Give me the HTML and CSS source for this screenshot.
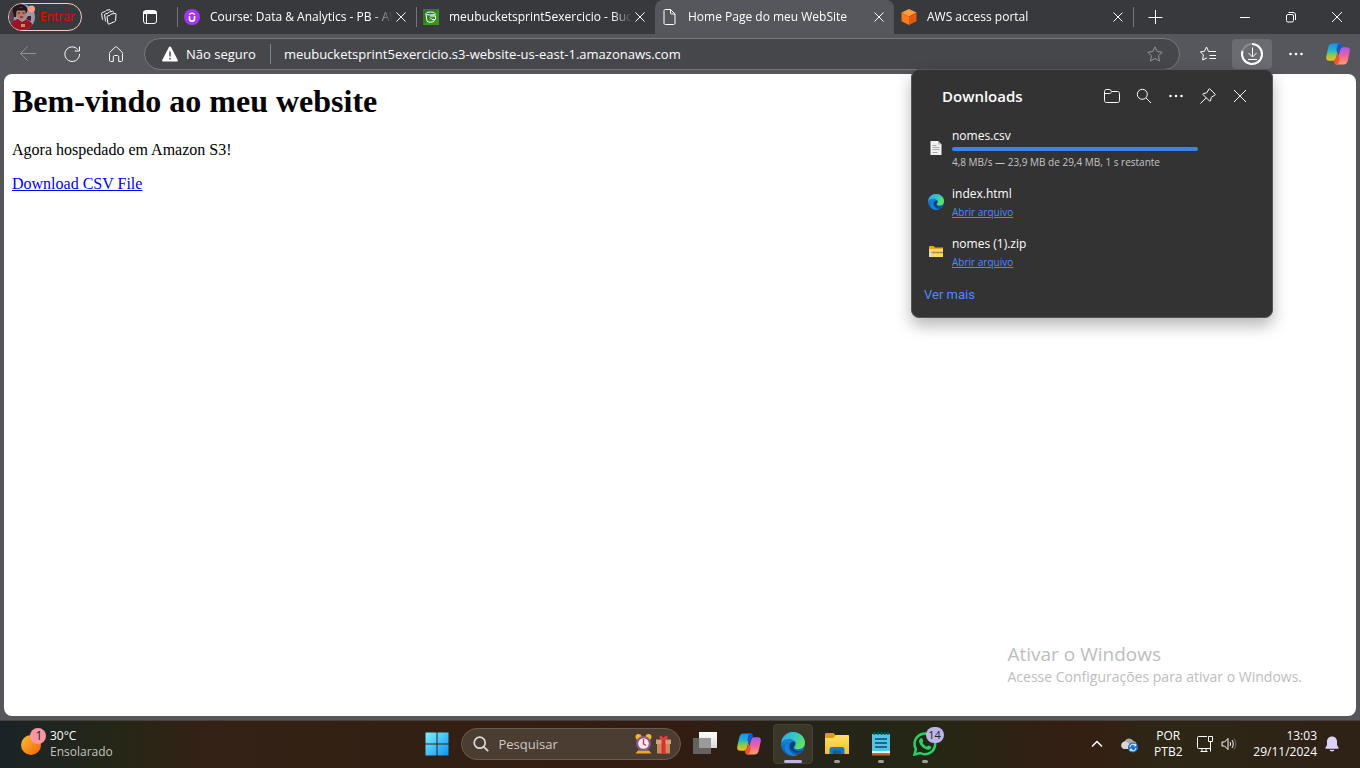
FILE: index.html
```html
<!DOCTYPE html>
<html lang="pt-BR">
<head>
<meta charset="utf-8">
<title>Home Page do meu WebSite</title>
<link rel="stylesheet" href="styles.css">
</head>
<body>
<svg class="defs" aria-hidden="true">
  <defs>
    <linearGradient id="cpA" x1="0" y1="0" x2="0" y2="1"><stop offset="0" stop-color="#1c8df0"/><stop offset=".4" stop-color="#22b5cf"/><stop offset=".7" stop-color="#9bc93c"/><stop offset="1" stop-color="#f6b81c"/></linearGradient>
    <linearGradient id="cpB" x1="0" y1="0" x2="0" y2="1"><stop offset="0" stop-color="#a55bf0"/><stop offset=".5" stop-color="#f0609a"/><stop offset="1" stop-color="#ffa06a"/></linearGradient>
    <linearGradient id="edA" x1="0" y1="0" x2="1" y2=".5"><stop offset="0" stop-color="#2aa5e8"/><stop offset=".6" stop-color="#35c9c0"/><stop offset="1" stop-color="#62e25a"/></linearGradient>
    <linearGradient id="edB" x1="0" y1="0" x2="0" y2="1"><stop offset="0" stop-color="#1c9be6"/><stop offset="1" stop-color="#0a56b0"/></linearGradient>
    <linearGradient id="winG" x1="0" y1="0" x2="1" y2="1"><stop offset="0" stop-color="#7ff0ff"/><stop offset="1" stop-color="#0a93f5"/></linearGradient>
    <linearGradient id="sunG" x1="0" y1="0" x2="1" y2="1"><stop offset="0" stop-color="#fbc02d"/><stop offset="1" stop-color="#f4610a"/></linearGradient>
    <linearGradient id="foldG" x1="0" y1="0" x2="0" y2="1"><stop offset="0" stop-color="#ffdf68"/><stop offset="1" stop-color="#fbc227"/></linearGradient>
    <linearGradient id="tvG" x1="0" y1="0" x2="0" y2="1"><stop offset="0" stop-color="#ffffff"/><stop offset="1" stop-color="#d8d8d8"/></linearGradient>
    <symbol id="close" viewBox="0 0 16 16"><path d="M3.5 3.5l9 9M12.5 3.5l-9 9" fill="none" stroke="currentColor"/></symbol>
    <symbol id="dots" viewBox="0 0 16 16"><g fill="currentColor"><circle cx="2.5" cy="8" r="1.3"/><circle cx="8" cy="8" r="1.3"/><circle cx="13.5" cy="8" r="1.3"/></g></symbol>
    <symbol id="copilot" viewBox="0 0 24 24">
      <path d="M15.600 3.200c-.4-1-1-1.700-2.200-1.700H6.500C4.100 1.500 2.900 3 2.300 5.300L.4 14c-.7 3 .2 4.700 2.700 4.700h3.700c1.700 0 2.600-1.100 3.100-2.800L12.500 7c.6-2 1.200-3.200 3.100-3.800z" fill="url(#cpA)"/>
      <path d="M8.400 20.800c.4 1 1 1.700 2.200 1.700h6.900c2.400 0 3.600-1.500 4.200-3.800l1.900-8.700c.7-3-.2-4.700-2.700-4.700h-3.700c-1.700 0-2.600 1.100-3.100 2.800L11.500 17c-.6 2-1.200 3.200-3.100 3.800z" fill="url(#cpB)"/>
      <path d="M13.300 1.500c1.500 0 2 .9 2.500 2.300l.5 1.700c-1.200.3-1.800 1.200-2.200 2.600L12.500 13 10.300 8c.9-3.200 1-6.500 3-6.500z" fill="#1f55c8"/>
      <path d="M10.700 22.500c-1.500 0-2-.9-2.500-2.300l-.5-1.700c1.200-.3 1.800-1.200 2.200-2.600l1.500-4.900 2.300 5c-.9 3.200-1 6.500-3 6.500z" fill="#f0542d"/>
    </symbol>
    <symbol id="edge" viewBox="0 0 24 24">
      <circle cx="12" cy="12" r="12" fill="url(#edB)"/>
      <path d="M.2 10.500C1.200 4.500 6 0 12 0c7 0 12 5.200 12 10.800 0 4-3.200 6.400-6.700 6.400-2.600 0-4-.9-4-1.800 0-.8 1.200-1.300 1.200-3.400 0-2.600-2.600-5.200-6.300-5.200-3.600 0-6.500 1.500-8 3.700z" fill="url(#edA)"/>
      <path d="M8.600 10.200c-1.300 1.500-1.700 3.700-.9 6 1.300 3.800 4.800 6.600 9 7-7.700 2.600-13-2.500-13-7.200 0-3 2.200-5.200 4.900-5.800z" fill="#1183d8"/>
      <path d="M14.200 9.700c-2.500-.5-5.100.9-5.500 3.900-.5 4.400 4.200 8.200 9.400 6.800 1.500-.4 2.900-1.200 3.900-2.200-2.200 1.100-5.400 1.400-7.900.2-2.400-1.200-2.200-2.900-1-4.100 1-1 1.700-2.600 1.100-4.600z" fill="#123f78"/>
    </symbol>
  </defs>
</svg>

<div class="desktop">
  <main class="browser">
    <header class="tabbar">
      <button class="profile">
        <svg class="avatar" viewBox="0 0 26 26" aria-hidden="true">
          <clipPath id="av"><circle cx="13" cy="13" r="13"/></clipPath>
          <g clip-path="url(#av)"><path d="M0 0h26v26H0z" fill="#9c97a6"/><path d="M0 0h6l-2 26H0z" fill="#5b4450"/><ellipse cx="11" cy="6" rx="7.500" ry="6" fill="#21161c"/><path d="M4 6h3v7H5z" fill="#21161c"/><ellipse cx="12" cy="9.500" rx="4.800" ry="6" fill="#b97a6c"/><path d="M7 4h10v2.500H7z" fill="#21161c"/><path d="M9 9h2M13.500 9h2M11 13h3" stroke="#3a1a1c"/><path d="M1 26c0-6 3-10 8-11l4 3 4-2.500c4 1 8 5 8 10.500z" fill="#9c1228"/><path d="M12 20h4v3h-4z" fill="#cf8a50"/><path d="M17 15l5 2v-5h-3z" fill="#40202a"/></g>
          <circle cx="22.500" cy="5" r="3.500" fill="#ff9a84"/>
        </svg>
        <span>Entrar</span>
      </button>
      <button class="tool" aria-label="Workspaces"><svg class="i18" viewBox="0 0 18 18" fill="none" stroke="currentColor"><path d="M8.800 7.900l2-.5 1.300-1.300 4-.7c.6-.1.900.2.900.8l-.4 6.200c0 .5-.3.900-.8 1.100l-5.800 2.600c-.5.200-.9 0-1-.6L8 8.900c0-.5.300-.9.800-1z"/><path d="M14.500 4.500c0-1-.5-1.400-1.200-1.200l-3 .6L9 5.200l-2.500.7c-.6.200-.9.500-.9 1l.8 5.800c.1.600.4.900.8.900"/><path d="M11.500 2.500c-.1-.7-.5-1-1.200-.8l-3 .7L6 3.700l-2.500.7c-.6.200-.9.500-.9 1l.8 5.500c.1.500.4.900.8.900"/></svg></button>
      <button class="tool" aria-label="Guias verticais"><svg class="i16" viewBox="0 0 16 16" fill="none" stroke="currentColor"><rect x="1.500" y="1.500" width="13" height="13" rx="2.500"/><path d="M1.500 3.500h13" stroke-width="3"/><path d="M4.500 5v9.500"/></svg></button>
      <nav class="tabs" aria-label="Guias">
        <div class="tab">
          <svg class="i16" viewBox="0 0 16 16"><circle cx="8" cy="8" r="8" fill="#a435f0"/><path d="M5.500 7v2.700c0 1.600.9 2.400 2.500 2.400s2.500-.8 2.500-2.400V7" fill="none" stroke="#fff" stroke-width="1.600"/><path d="M5 5.600l3-1.700 3 1.700" fill="none" stroke="#fff" stroke-width="1.200"/></svg>
          <a class="tab-title" href="#">Course: Data &amp; Analytics - PB - AWS</a>
          <button class="tab-close" aria-label="Fechar"><svg class="i16"><use href="#close"/></svg></button>
        </div>
        <div class="tab">
          <svg class="i16" viewBox="0 0 16 16"><path d="M0 0h16v16H0z" fill="#2f7d1c"/><path d="M0 16L16 0v16z" fill="#479f2c" opacity=".6"/><ellipse cx="7.500" cy="4.500" rx="4.500" ry="1.500" fill="none" stroke="#fff"/><path d="M3 5l1 7c.5 1.600 6.500 1.600 7 0l.4-2M12 5l-.3 1.500M7 7h5.500v3.500H9L7 8.500" fill="none" stroke="#fff"/></svg>
          <a class="tab-title" href="#">meubucketsprint5exercicio - Bucket do S3</a>
          <button class="tab-close" aria-label="Fechar"><svg class="i16"><use href="#close"/></svg></button>
        </div>
        <div class="tab active">
          <svg class="i16" viewBox="0 0 16 16" fill="none" stroke="currentColor"><path d="M3.500.5h5l4.500 4.500v9c0 1-.5 1.500-1.500 1.500h-8c-1 0-1.500-.5-1.500-1.500V2C2 1 2.500.5 3.500.5zM8.500.5V4c0 .7.300 1 1 1H13"/></svg>
          <a class="tab-title" href="#">Home Page do meu WebSite</a>
          <button class="tab-close" aria-label="Fechar"><svg class="i16"><use href="#close"/></svg></button>
        </div>
        <div class="tab">
          <svg class="i16" viewBox="0 0 16 16"><path d="M8 0l7.500 3.600L8 7.500.5 3.600z" fill="#ff9d3a"/><path d="M.5 3.600L8 7.500V16L.5 12.300z" fill="#fb7a1e"/><path d="M15.500 3.600L8 7.500V16l7.500-3.700z" fill="#e25a12"/></svg>
          <a class="tab-title" href="#">AWS access portal</a>
          <button class="tab-close" aria-label="Fechar"><svg class="i16"><use href="#close"/></svg></button>
        </div>
        <button class="newtab" aria-label="Nova guia"><svg class="i16" viewBox="0 0 16 16" stroke="currentColor"><path d="M7.500 1v14M.5 8.500h14"/></svg></button>
      </nav>
      <div class="winbtns">
        <button aria-label="Minimizar"><svg class="i16" viewBox="0 0 16 16" stroke="currentColor"><path d="M3 8.500h10"/></svg></button>
        <button aria-label="Restaurar"><svg class="i16" viewBox="0 0 16 16" fill="none" stroke="currentColor"><rect x="3.500" y="5.500" width="7" height="7.500" rx="1.500"/><path d="M5.500 3.500H10c1.700 0 2.500.8 2.500 2.500v5"/></svg></button>
        <button aria-label="Fechar janela"><svg class="i16" viewBox="0 0 16 16" stroke="currentColor"><path d="M3 3l10 10M13 3L3 13"/></svg></button>
      </div>
    </header>

    <div class="toolbar">
      <button class="nav dim" aria-label="Voltar"><svg class="i16" viewBox="0 0 16 16" fill="none" stroke="currentColor"><path d="M16 7.500H.5M7.500.5l-7 7 7 7"/></svg></button>
      <button class="nav" aria-label="Atualizar"><svg class="i16" viewBox="0 0 16 16" fill="none" stroke="currentColor"><path d="M13.800 3.500A7.300 7.300 0 1 0 15.500 8M15.500.5v4.500h-4.800"/></svg></button>
      <button class="nav" aria-label="Início"><svg class="i16" viewBox="0 0 16 16" fill="none" stroke="currentColor"><path d="M1.500 7.200c0-.5.200-.8.500-1.100L7 1.300c.6-.6 1.400-.6 2 0l5 4.800c.3.300.5.600.5 1.100v6.800c0 .8-.4 1.500-1.200 1.500h-2.600V11c0-.8-.4-1.500-1.200-1.500h-3c-.8 0-1.200.7-1.200 1.500v4.500H2.700c-.8 0-1.200-.7-1.200-1.500z"/></svg></button>
      <div class="address">
        <svg class="i16" viewBox="0 0 16 16"><path d="M8 .5c.5 0 .8.200 1 .6l6.700 12.800c.4.800 0 1.600-.9 1.600H1.200c-.9 0-1.300-.8-.9-1.600L7 1.100c.2-.4.500-.6 1-.6z" fill="#fff"/><path d="M8 5.500v5" stroke="#47484c" stroke-width="1.500"/><circle cx="8" cy="12.700" r=".9" fill="#47484c"/></svg>
        <span class="secure">Não seguro</span>
        <input class="url" aria-label="Endereço" value="meubucketsprint5exercicio.s3-website-us-east-1.amazonaws.com">
        <button class="star" aria-label="Favoritar"><svg class="i16" viewBox="0 0 16 16" fill="none" stroke="currentColor"><path d="M8 .8l2.200 4.700 5 .7-3.600 3.600.9 5.200L8 12.500 3.500 15l.9-5.200L.8 6.200l5-.7z"/></svg></button>
      </div>
      <button class="nav" aria-label="Favoritos"><svg class="i16" viewBox="0 0 16 16" fill="none" stroke="currentColor"><path d="M10.800 5.500H8.600L6.500 1 4.400 5.300l-4 .5 3 3.200-.8 5L7 11.800"/><path d="M9 5.500h7M9.500 9.500H16M9.500 12.500H16"/></svg></button>
      <button class="nav on" aria-label="Downloads"><svg class="i24" viewBox="0 0 24 24" fill="none"><circle cx="12" cy="12" r="10" stroke="#8a8b90" stroke-width="2"/><path d="M12 2A10 10 0 1 1 2.500 8.900" stroke="#fff" stroke-width="2"/><path d="M12.500 5.500v9M8.500 11l4 4 4-4M8 17.500h9" stroke="#fff"/></svg></button>
      <button class="nav" aria-label="Mais"><svg class="i16"><use href="#dots"/></svg></button>
      <button class="nav copilot" aria-label="Copilot"><svg class="i24"><use href="#copilot"/></svg></button>
    </div>

    <article class="page">
      <h1>Bem-vindo ao meu website</h1>
      <p>Agora hospedado em Amazon S3!</p>
      <a href="#">Download CSV File</a>
    </article>

    <aside class="watermark">
      <div class="wm-title">Ativar o Windows</div>
      <div>Acesse Configurações para ativar o Windows.</div>
    </aside>

    <section class="downloads" aria-label="Downloads">
      <header class="dl-head">
        <h2>Downloads</h2>
        <button aria-label="Abrir pasta"><svg class="i16" viewBox="0 0 16 16" fill="none" stroke="currentColor"><path d="M.5 3.500c0-1 .6-2 1.700-2h3c.7 0 1 .2 1.400.6l1.400 1.400h5.500c1.200 0 2 .8 2 2v7c0 1.200-.8 2-2 2H2.500c-1.200 0-2-.8-2-2zM.5 5.500h4.700c.7 0 1-.2 1.400-.6L8 3.500"/></svg></button>
        <button aria-label="Pesquisar downloads"><svg class="i16" viewBox="0 0 16 16" fill="none" stroke="currentColor"><circle cx="6.300" cy="6.300" r="5"/><path d="M10 10l5 5"/></svg></button>
        <button aria-label="Mais opções"><svg class="i16"><use href="#dots"/></svg></button>
        <button aria-label="Fixar"><svg class="i16" viewBox="0 0 16 16" fill="none" stroke="currentColor"><path d="M9.800.9l5.300 5.300c.3.300.2.800-.2 1L11.700 9c-.3.100-.4.300-.5.600l-.7 3.200c-.1.400-.6.600-.9.300L3 6.500c-.3-.3-.2-.8.300-.9l3.200-.7c.3-.1.500-.2.600-.5L8.800 1.100c.2-.4.700-.5 1-.2zM6.200 9.800L.5 15.500"/></svg></button>
        <button aria-label="Fechar downloads"><svg class="i16" viewBox="0 0 16 16" stroke="currentColor"><path d="M2 2l12 12M14 2L2 14"/></svg></button>
      </header>
      <ul>
        <li>
          <svg class="i16" viewBox="0 0 16 16"><path d="M2.500 1H10l3.500 3.500V15h-11z" fill="#f2f2f2"/><path d="M10 1v3.500h3.500" fill="#bbb"/><path d="M4.500 5.500h4M4.500 7.500h7M4.500 9.500h7M4.500 12.500h5" stroke="#a8a8a8"/></svg>
          <div class="dl-body"><span class="dl-name">nomes.csv</span><div class="bar"></div><span class="dl-status">4,8 MB/s — 23,9 MB de 29,4 MB, 1 s restante</span></div>
        </li>
        <li>
          <svg class="i16"><use href="#edge"/></svg>
          <div class="dl-body"><span class="dl-name">index.html</span><a href="#">Abrir arquivo</a></div>
        </li>
        <li>
          <svg class="i16" viewBox="0 0 16 16"><path d="M1 3c0-.6.300-1 1-1h3.500L7 3.500h8V7H1z" fill="#f0a818"/><path d="M1 5h14v8H1z" fill="#ffd968"/><path d="M1 8.500h14" stroke="#a58b48" stroke-width="1.500"/><path d="M2.500 7v6" stroke="#ddd" stroke-width="2"/></svg>
          <div class="dl-body"><span class="dl-name">nomes (1).zip</span><a href="#">Abrir arquivo</a></div>
        </li>
      </ul>
      <a class="more" href="#">Ver mais</a>
    </section>
  </main>

  <footer class="taskbar">
    <button class="weather">
      <svg class="sun" viewBox="0 0 26 28"><circle cx="10" cy="17" r="10" fill="url(#sunG)"/><circle cx="17" cy="8" r="8" fill="#ff96a4"/><text x="18" y="12" text-anchor="middle" class="badge-text">1</text></svg>
      <span class="w-text"><span>30°C</span><span class="muted">Ensolarado</span></span>
    </button>

    <div class="apps">
      <button class="app" aria-label="Iniciar"><svg class="i24" viewBox="0 0 24 24"><path d="M.5.500h11v11H.5zM12.500.5h11v11h-11zM.5 12.500h11v11H.5zM12.500 12.500h11v11h-11z" fill="url(#winG)"/></svg></button>
      <label class="search">
        <svg class="i16" viewBox="0 0 16 16" fill="none" stroke="#dedad7" stroke-width="1.700"><circle cx="6.700" cy="6.700" r="5.500"/><path d="M10.800 10.800l4.400 4.400"/></svg>
        <input type="search" placeholder="Pesquisar" aria-label="Pesquisar">
        <svg class="gifts" viewBox="0 0 36 20"><path d="M3 16.500h11l2.500 3H.5z" fill="#f0a81c"/><circle cx="3.500" cy="3" r="3" fill="#f5b72b"/><circle cx="13.500" cy="3" r="3" fill="#f5b72b"/><circle cx="8.500" cy="9.500" r="7.500" fill="#8a5a8e"/><circle cx="8.500" cy="9.500" r="5.300" fill="#f4ecf4"/><path d="M8.500 5v5l2.500 1.500" stroke="#d22b3a" stroke-width="1.300" fill="none"/><path d="M22 9h13v10.500H22z" fill="#c98a5c"/><path d="M21 5.500h15V10H21z" fill="#dba077"/><path d="M26.500 5.500h4v14h-4z" fill="#e02c33"/><path d="M28.500 5.500c-4 0-5-2.500-3.500-3.500s3 1 3.500 2.500c.5-1.500 2-3.500 3.500-2.500s.5 3.500-3.500 3.500z" fill="#f03a3a"/></svg>
      </label>
      <button class="app" aria-label="Visão de tarefas"><svg class="i24" viewBox="0 0 24 24"><path d="M6 0h18v16H6z" fill="url(#tvG)"/><path d="M0 6h18v16H0z" fill="#6a6a6a" opacity=".9"/><path d="M6 6h12v10H6z" fill="#9a9a9a"/></svg></button>
      <button class="app" aria-label="Copilot"><svg class="i24"><use href="#copilot"/></svg></button>
      <button class="app current" aria-label="Microsoft Edge"><svg class="i24"><use href="#edge"/></svg></button>
      <button class="app open" aria-label="Explorador de Arquivos"><svg class="i24" viewBox="0 0 24 24"><path d="M0 2.500C0 1.700.5 1 1.500 1h6c1 0 1.500.300 2 1l1 1.500V9H0z" fill="#dd9d10"/><path d="M0 6h8.500l2-3H23c.6 0 1 .4 1 1v18H0z" fill="url(#foldG)"/><path d="M4.500 22v-4.500c0-1.500.8-2.500 2.500-2.500h10c1.700 0 2.500 1 2.500 2.500V22z" fill="#1478cf"/><path d="M8 18.500h8V22H8z" fill="#0c5da8"/></svg></button>
      <button class="app open" aria-label="Bloco de Notas"><svg class="i24" viewBox="0 0 24 24"><path d="M3 2h18v18H3z" fill="#56c3e0"/><path d="M3 19h18v2.500H3z" fill="#f1f1f1"/><path d="M3 21.500h18v2H3z" fill="#c2602c"/><path d="M6 7h12M6 11h12M6 15h12" stroke="#126b94" stroke-width="2"/><path d="M5.500 0v3M9 0v3M12.500 0v3M16 0v3M19 0v3" stroke="#0e5878" stroke-width="1.500"/></svg></button>
      <button class="app open" aria-label="WhatsApp, 14 mensagens"><svg class="i24" viewBox="0 0 24 24"><path d="M1.500 22.500l1.400-5.500A10.300 10.300 0 1 1 7 21z" fill="none" stroke="#25d366" stroke-width="2.500"/><path d="M7.500 6.500c.8-.7 1.500-.4 1.800.2l.9 2c.2.600-.3 1.200-.8 1.800 1 2 2.300 3.300 4.300 4.200.7-.5 1.200-1.500 1.900-1.200l2.100 1c.7.300.6 1 .2 1.700-.8 1.500-3 1.900-5 1.100-3.400-1.300-5.600-3.500-6.700-6.700-.5-1.600.1-3.100 1.300-4.100z" fill="#25d366"/></svg><span class="count">14</span></button>
    </div>

    <div class="tray">
      <button class="chev" aria-label="Mostrar ícones ocultos"><svg class="i16" viewBox="0 0 16 16" fill="none" stroke="#fff" stroke-width="1.500"><path d="M3 10.500l5-5 5 5"/></svg></button>
      <button class="cloud" aria-label="OneDrive"><svg class="i18" viewBox="0 0 18 18"><path d="M5 14a4 4 0 0 1-.5-7.500A5 5 0 0 1 13.500 6c2 .3 3 2 3 4 0 2.500-1.500 4-3.500 4z" fill="#a9a8a6"/><path d="M5 14c-5 0-5-6.500-.5-7.500 3-.5 4 1 8 7.500z" fill="#d8d7d5"/><circle cx="13" cy="12.500" r="5" fill="#1673d1"/><path d="M10 12a3 3 0 0 1 5.500-1.500M16 13a3 3 0 0 1-5.500 1.500M15.800 8.800v2h-2M10.200 16.200v-2h2" fill="none" stroke="#fff"/></svg></button>
      <button class="lang">POR<br>PTB2</button>
      <button class="net" aria-label="Rede e volume"><svg class="i16" viewBox="0 0 16 16" fill="none" stroke="#fff"><path d="M10 .5H1.500c-.6 0-1 .4-1 1v10c0 .6.400 1 1 1H13M5 12.500v3M9 12.500v3M3.500 15.500h7M11.500.5h4v5h-4zM13.500 5.500v10"/></svg><svg class="i16" viewBox="0 0 16 16" fill="none" stroke="#fff"><path d="M1 6h2.500L7 2.500v11L3.500 10H1zM9 6c.8 1.200.8 2.800 0 4M11 4c1.700 2.500 1.700 5.500 0 8"/><path d="M13 2.500c2.500 3.500 2.500 7.500 0 11" stroke="#77716b"/></svg></button>
      <button class="clock">13:03<br>29/11/2024</button>
      <button class="bell" aria-label="Notificações"><svg class="i16" viewBox="0 0 16 16"><path d="M8 .5c3 0 5 2.200 5 5V9l1.600 2.800c.2.500 0 .9-.6.900H2c-.6 0-.8-.4-.6-.9L3 9V5.500c0-2.800 2-5 5-5zM5.500 13.700h5c-.5 2.300-4.500 2.300-5 0z" fill="#dcd2f7"/></svg></button>
    </div>
  </footer>
</div>
</body>
</html>
```
FILE: styles.css
```css
* { box-sizing: border-box; }

body {
  margin: 0;
  font: 12px/16px "Segoe UI", "Open Sans", "Noto Sans", sans-serif;
  color: #fff;
}

button {
  margin: 0;
  padding: 0;
  border: 0;
  background: none;
  color: inherit;
  font: inherit;
  display: flex;
  align-items: center;
  justify-content: center;
  flex: none;
}

input {
  border: 0;
  padding: 0;
  background: none;
  color: inherit;
  font: inherit;
  min-width: 0;
}

svg { display: block; flex: none; }
.defs { position: absolute; width: 0; height: 0; }
.i16 { width: 16px; height: 16px; }
.i18 { width: 18px; height: 18px; }
.i24 { width: 24px; height: 24px; }

.desktop {
  display: flex;
  flex-direction: column;
  min-height: 100vh;
}

.browser {
  position: relative;
  flex: 1;
  display: flex;
  flex-direction: column;
  background: #56575c;
  padding-bottom: 4px;
}

/* Tab strip */
.tabbar {
  display: flex;
  align-items: center;
  height: 34px;
  padding-left: 8px;
  background: #38393d;
}

.profile {
  width: 74px;
  height: 28px;
  margin-right: 5px;
  border: 1px solid #f5cdb8;
  border-radius: 14px;
  justify-content: flex-start;
  gap: 5px;
  color: #f60000;
}

.avatar { width: 26px; height: 26px; }
.tool { width: 42px; height: 34px; }

.tabs {
  flex: 1;
  min-width: 0;
  display: flex;
  align-items: center;
  align-self: stretch;
  margin-left: 6px;
}

.tab {
  flex: 0 1 239px;
  min-width: 0;
  height: 34px;
  display: flex;
  align-items: center;
  padding: 0 7px;
  position: relative;
}

.tab::before {
  content: "";
  position: absolute;
  left: 0;
  top: 7px;
  width: 1px;
  height: 20px;
  background: #75767a;
}

.tab.active {
  background: #56575c;
  border-radius: 8px 8px 0 0;
}

.tab.active::before,
.tab.active + .tab::before { display: none; }

.tab-title {
  flex: 1;
  min-width: 0;
  margin-left: 10px;
  overflow: hidden;
  white-space: nowrap;
  color: inherit;
  text-decoration: none;
  mask-image: linear-gradient(to right, #000 calc(100% - 20px), transparent);
}

.tab-close { width: 16px; height: 16px; }

.newtab {
  width: 44px;
  height: 20px;
  border-left: 1px solid #75767a;
}

.winbtns { display: flex; }
.winbtns button { width: 46px; height: 34px; }

/* Toolbar */
.toolbar {
  display: flex;
  align-items: center;
  gap: 4px;
  height: 40px;
  padding: 0 4px 0 8px;
}

.nav {
  width: 40px;
  height: 30px;
  border-radius: 4px;
}

.nav.dim { color: #929397; }
.nav.on { background: #6b6c71; }
.nav.copilot { width: 36px; }

.address {
  flex: 1;
  min-width: 0;
  height: 32px;
  margin: 0 4px;
  padding: 0 16px 0 17px;
  display: flex;
  align-items: center;
  background: #46474b;
  border: 1px solid #77787c;
  border-radius: 16px;
  font-size: 13px;
  line-height: 20px;
}

.secure {
  margin-left: 8px;
  padding-right: 14px;
  border-right: 1px solid #85868a;
}

.url { flex: 1; margin-left: 13px; }
.star { color: #929397; }

/* Web page */
.page {
  flex: 1;
  margin: 0 4px;
  padding: 9px 8px 8px;
  background: #fff;
  border-radius: 8px;
  color: #000;
  font: 16px/normal "Liberation Serif", "Times New Roman", serif;
}

.page h1 { margin: 0 0 21px; font-size: 32px; line-height: 37px; }
.page p { margin: 0 0 16px; line-height: 18px; }
.page a { color: #0000ee; }

.watermark {
  position: absolute;
  right: 58px;
  bottom: 33px;
  color: #bdbdbd;
  font-size: 14px;
  line-height: 20px;
}

.wm-title { font-size: 19px; line-height: 26px; }

/* Downloads flyout */
.downloads {
  position: absolute;
  top: 69px;
  right: 87px;
  width: 362px;
  padding: 10px 16px 12px 12px;
  background: #333;
  border: 1px solid #555;
  border-radius: 8px;
  box-shadow: 0 8px 16px rgba(0, 0, 0, .28);
}

.dl-head { display: flex; align-items: center; }
.dl-head h2 { flex: 1; margin: 0 0 0 18px; font-size: 15px; line-height: 20px; font-weight: 600; }
.dl-head button { width: 32px; height: 32px; }

.downloads ul {
  list-style: none;
  margin: 14px 0 15px;
  padding: 0;
  display: grid;
  gap: 14px;
}

.downloads li {
  display: flex;
  align-items: center;
  gap: 8px;
  padding-left: 4px;
}

.dl-body { display: flex; flex-direction: column; align-items: flex-start; }
.dl-name { line-height: 20px; }
.dl-status, .dl-body a { font-size: 10px; line-height: 16px; }
.dl-status { color: #c4c4c4; }
.dl-body a, .more { color: #4a8cff; }

.bar {
  width: 246px;
  height: 4px;
  margin: 1px 0 3px;
  border-radius: 2px;
  background: #3f80f5;
}

.more {
  display: inline-block;
  font: 13px/20px Roboto, sans-serif;
  text-decoration: none;
}

/* Taskbar */
.taskbar {
  display: grid;
  grid-template-columns: 1fr auto 1fr;
  align-items: center;
  height: 48px;
  padding-left: 1px;
  box-shadow: inset 0 1px #48403a;
  background: linear-gradient(to right, #1b2327 0, #242717 8%, #332215 15%, #331f13 38%, #331c12 50%, #25231a 58%, #252714 69%, #351e13 79%, #2d2716 86%, #2e2116 100%);
}

.weather { justify-self: start; gap: 3px; margin-left: 20px; margin-bottom: 5px; }
.sun { width: 26px; height: 28px; }
.badge-text { font-size: 12px; fill: #222; }
.w-text { display: flex; flex-direction: column; text-align: left; margin-top: 4px; }
.muted { color: #c4c2bd; }

.apps { display: flex; align-items: center; gap: 4px; }

.app {
  width: 40px;
  height: 40px;
  position: relative;
  border-radius: 4px;
}

.app.current { background: #3a3628; border: 1px solid #454134; }

.app.open::after,
.app.current::after {
  content: "";
  position: absolute;
  bottom: 1px;
  width: 6px;
  height: 3px;
  border-radius: 2px;
  background: #a09c96;
}

.app.current::after { bottom: 0; width: 18px; background: #bdb2ec; }

.count {
  position: absolute;
  top: 3px;
  right: 1px;
  width: 18px;
  height: 16px;
  border-radius: 8px;
  background: #beb4ec;
  color: #222;
  font-size: 11px;
  text-align: center;
}

.search {
  width: 220px;
  height: 32px;
  display: flex;
  align-items: center;
  gap: 10px;
  padding: 0 9px 0 11px;
  border: 1px solid #695a4f;
  border-radius: 16px;
  background: #4c3d32;
  font-size: 13px;
}

.search input { flex: 1; }
.search input::placeholder { color: #cfcac6; opacity: 1; }
.gifts { width: 36px; height: 20px; }

.tray { justify-self: end; display: flex; align-items: center; padding-right: 20px; }
.chev { width: 32px; }
.cloud { width: 32px; }
.lang { width: 46px; }
.net { gap: 8px; padding: 0 16px 0 6px; }
.clock { text-align: right; }
.bell { margin-left: 7px; }
```
